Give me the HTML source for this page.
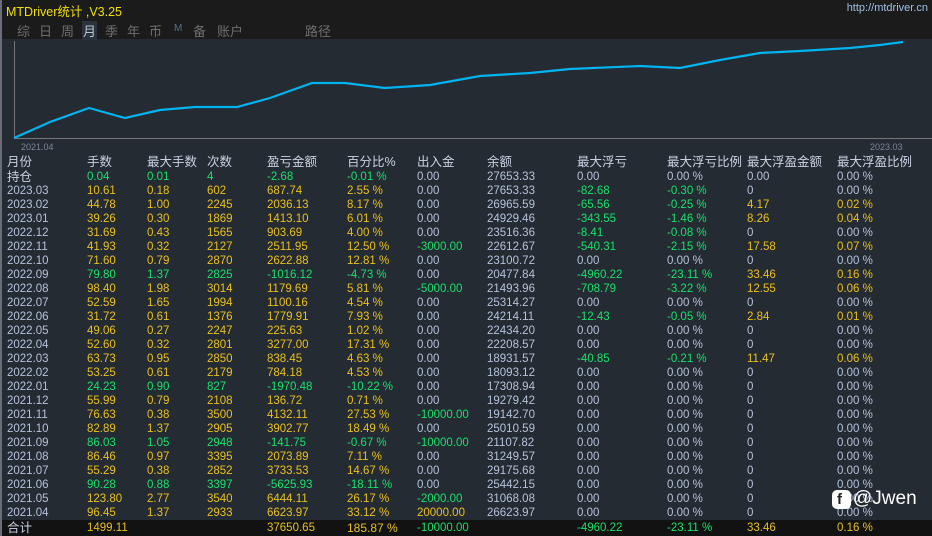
<!DOCTYPE html>
<html><head><meta charset="utf-8"><style>
*{margin:0;padding:0;box-sizing:border-box}
body{width:932px;height:536px;overflow:hidden;background:#252b33;font-family:"Liberation Sans","Noto Sans CJK SC",sans-serif;position:relative}
#top{position:absolute;left:0;top:0;width:932px;height:39px;background:#1b1b1b}
#title{position:absolute;left:6px;top:1px;color:#f0e000;font-size:12.5px}
#url{position:absolute;right:4px;top:2px;color:#9ec0e6;font-size:11px}
#tabs{position:absolute;left:17px;top:21px;color:#6e6e6e;font-size:13px}
#tabs span{position:absolute;top:0;white-space:nowrap}
.sel{background:#2a323c;color:#b8c4d8;padding:0 1px}
#lb{position:absolute;left:0;top:0;width:2px;height:536px;background:#6a6e78}
.r{position:absolute;left:0;width:932px;height:14px;font-size:11.5px;line-height:14px;white-space:nowrap}
.r span{position:absolute;top:0}
.h{font-size:12.5px;color:#c8d2e2;height:16px;line-height:16px}
.g{color:#18e06a}.y{color:#e8c020}.b{color:#b4c2da}
.c0{left:7px}.c1{left:87px}.c2{left:147px}.c3{left:207px}.c4{left:267px}.c5{left:347px}.c6{left:417px}.c7{left:487px}.c8{left:577px}.c9{left:667px}.c10{left:747px}.c11{left:837px}
#tot{position:absolute;left:0;top:520px;width:932px;height:16px;background:#121212}
</style></head><body>
<div id="top"></div>
<div id="title">MTDriver统计 ,V3.25</div>
<div id="url">http://mtdriver.cn</div>
<div id="tabs"><span style="left:0">综</span><span style="left:22px">日</span><span style="left:44px">周</span><span class="sel" style="left:65px">月</span><span style="left:88px">季</span><span style="left:110px">年</span><span style="left:132px">币</span><span style="left:157px;font-size:10px;top:2px;color:#56708e">M</span><span style="left:176px">备</span><span style="left:200px">账户</span><span style="left:288px">路径</span></div>
<svg style="position:absolute;left:0;top:39px" width="932" height="115">
<line x1="14.5" y1="2" x2="14.5" y2="99.5" stroke="#777" stroke-width="1"/>
<line x1="14" y1="99.5" x2="932" y2="99.5" stroke="#777" stroke-width="1"/>
<polyline fill="none" stroke="#00b4f0" stroke-width="2.2" points="14,99 50,83 89,69 125,79 160,71 195,68 237,68 270,59 312,44 345,44 385,49 430,46 480,37 530,34 570,30 640,27 680,29 720,21 760,14 800,12 850,9 880,6 903,3"/>
<text x="21" y="111" fill="#7a8698" font-size="9" font-family="Liberation Sans">2021.04</text>
<text x="870" y="111" fill="#7a8698" font-size="9" font-family="Liberation Sans">2023.03</text>
</svg>
<div id="tot"></div>
<div id="lb"></div>

<div class="r h" style="top:154px"><span class="c0">月份</span><span class="c1">手数</span><span class="c2">最大手数</span><span class="c3">次数</span><span class="c4">盈亏金额</span><span class="c5">百分比%</span><span class="c6">出入金</span><span class="c7">余额</span><span class="c8">最大浮亏</span><span class="c9">最大浮亏比例</span><span class="c10">最大浮盈金额</span><span class="c11">最大浮盈比例</span></div>
<div class="r" style="top:170px;font-size:11.5px"><span class="c0" style="color:#c8d2e2;font-size:12.5px">持仓</span><span class="c1 g">0.04</span><span class="c2 g">0.01</span><span class="c3 g">4</span><span class="c4 g">-2.68</span><span class="c5 g">-0.01 %</span><span class="c6 b">0.00</span><span class="c7 b">27653.33</span><span class="c8 b">0.00</span><span class="c9 b">0.00 %</span><span class="c10 b">0.00</span><span class="c11 b">0.00 %</span></div>
<div class="r" style="top:184px"><span class="c0 b">2023.03</span><span class="c1 y">10.61</span><span class="c2 y">0.18</span><span class="c3 y">602</span><span class="c4 y">687.74</span><span class="c5 y">2.55 %</span><span class="c6 b">0.00</span><span class="c7 b">27653.33</span><span class="c8 g">-82.68</span><span class="c9 g">-0.30 %</span><span class="c10 b">0</span><span class="c11 b">0.00 %</span></div>
<div class="r" style="top:198px"><span class="c0 b">2023.02</span><span class="c1 y">44.78</span><span class="c2 y">1.00</span><span class="c3 y">2245</span><span class="c4 y">2036.13</span><span class="c5 y">8.17 %</span><span class="c6 b">0.00</span><span class="c7 b">26965.59</span><span class="c8 g">-65.56</span><span class="c9 g">-0.25 %</span><span class="c10 y">4.17</span><span class="c11 y">0.02 %</span></div>
<div class="r" style="top:212px"><span class="c0 b">2023.01</span><span class="c1 y">39.26</span><span class="c2 y">0.30</span><span class="c3 y">1869</span><span class="c4 y">1413.10</span><span class="c5 y">6.01 %</span><span class="c6 b">0.00</span><span class="c7 b">24929.46</span><span class="c8 g">-343.55</span><span class="c9 g">-1.46 %</span><span class="c10 y">8.26</span><span class="c11 y">0.04 %</span></div>
<div class="r" style="top:226px"><span class="c0 b">2022.12</span><span class="c1 y">31.69</span><span class="c2 y">0.43</span><span class="c3 y">1565</span><span class="c4 y">903.69</span><span class="c5 y">4.00 %</span><span class="c6 b">0.00</span><span class="c7 b">23516.36</span><span class="c8 g">-8.41</span><span class="c9 g">-0.08 %</span><span class="c10 b">0</span><span class="c11 b">0.00 %</span></div>
<div class="r" style="top:240px"><span class="c0 b">2022.11</span><span class="c1 y">41.93</span><span class="c2 y">0.32</span><span class="c3 y">2127</span><span class="c4 y">2511.95</span><span class="c5 y">12.50 %</span><span class="c6 g">-3000.00</span><span class="c7 b">22612.67</span><span class="c8 g">-540.31</span><span class="c9 g">-2.15 %</span><span class="c10 y">17.58</span><span class="c11 y">0.07 %</span></div>
<div class="r" style="top:254px"><span class="c0 b">2022.10</span><span class="c1 y">71.60</span><span class="c2 y">0.79</span><span class="c3 y">2870</span><span class="c4 y">2622.88</span><span class="c5 y">12.81 %</span><span class="c6 b">0.00</span><span class="c7 b">23100.72</span><span class="c8 b">0.00</span><span class="c9 b">0.00 %</span><span class="c10 b">0</span><span class="c11 b">0.00 %</span></div>
<div class="r" style="top:268px"><span class="c0 b">2022.09</span><span class="c1 g">79.80</span><span class="c2 g">1.37</span><span class="c3 g">2825</span><span class="c4 g">-1016.12</span><span class="c5 g">-4.73 %</span><span class="c6 b">0.00</span><span class="c7 b">20477.84</span><span class="c8 g">-4960.22</span><span class="c9 g">-23.11 %</span><span class="c10 y">33.46</span><span class="c11 y">0.16 %</span></div>
<div class="r" style="top:282px"><span class="c0 b">2022.08</span><span class="c1 y">98.40</span><span class="c2 y">1.98</span><span class="c3 y">3014</span><span class="c4 y">1179.69</span><span class="c5 y">5.81 %</span><span class="c6 g">-5000.00</span><span class="c7 b">21493.96</span><span class="c8 g">-708.79</span><span class="c9 g">-3.22 %</span><span class="c10 y">12.55</span><span class="c11 y">0.06 %</span></div>
<div class="r" style="top:296px"><span class="c0 b">2022.07</span><span class="c1 y">52.59</span><span class="c2 y">1.65</span><span class="c3 y">1994</span><span class="c4 y">1100.16</span><span class="c5 y">4.54 %</span><span class="c6 b">0.00</span><span class="c7 b">25314.27</span><span class="c8 b">0.00</span><span class="c9 b">0.00 %</span><span class="c10 b">0</span><span class="c11 b">0.00 %</span></div>
<div class="r" style="top:310px"><span class="c0 b">2022.06</span><span class="c1 y">31.72</span><span class="c2 y">0.61</span><span class="c3 y">1376</span><span class="c4 y">1779.91</span><span class="c5 y">7.93 %</span><span class="c6 b">0.00</span><span class="c7 b">24214.11</span><span class="c8 g">-12.43</span><span class="c9 g">-0.05 %</span><span class="c10 y">2.84</span><span class="c11 y">0.01 %</span></div>
<div class="r" style="top:324px"><span class="c0 b">2022.05</span><span class="c1 y">49.06</span><span class="c2 y">0.27</span><span class="c3 y">2247</span><span class="c4 y">225.63</span><span class="c5 y">1.02 %</span><span class="c6 b">0.00</span><span class="c7 b">22434.20</span><span class="c8 b">0.00</span><span class="c9 b">0.00 %</span><span class="c10 b">0</span><span class="c11 b">0.00 %</span></div>
<div class="r" style="top:338px"><span class="c0 b">2022.04</span><span class="c1 y">52.60</span><span class="c2 y">0.32</span><span class="c3 y">2801</span><span class="c4 y">3277.00</span><span class="c5 y">17.31 %</span><span class="c6 b">0.00</span><span class="c7 b">22208.57</span><span class="c8 b">0.00</span><span class="c9 b">0.00 %</span><span class="c10 b">0</span><span class="c11 b">0.00 %</span></div>
<div class="r" style="top:352px"><span class="c0 b">2022.03</span><span class="c1 y">63.73</span><span class="c2 y">0.95</span><span class="c3 y">2850</span><span class="c4 y">838.45</span><span class="c5 y">4.63 %</span><span class="c6 b">0.00</span><span class="c7 b">18931.57</span><span class="c8 g">-40.85</span><span class="c9 g">-0.21 %</span><span class="c10 y">11.47</span><span class="c11 y">0.06 %</span></div>
<div class="r" style="top:366px"><span class="c0 b">2022.02</span><span class="c1 y">53.25</span><span class="c2 y">0.61</span><span class="c3 y">2179</span><span class="c4 y">784.18</span><span class="c5 y">4.53 %</span><span class="c6 b">0.00</span><span class="c7 b">18093.12</span><span class="c8 b">0.00</span><span class="c9 b">0.00 %</span><span class="c10 b">0</span><span class="c11 b">0.00 %</span></div>
<div class="r" style="top:380px"><span class="c0 b">2022.01</span><span class="c1 g">24.23</span><span class="c2 g">0.90</span><span class="c3 g">827</span><span class="c4 g">-1970.48</span><span class="c5 g">-10.22 %</span><span class="c6 b">0.00</span><span class="c7 b">17308.94</span><span class="c8 b">0.00</span><span class="c9 b">0.00 %</span><span class="c10 b">0</span><span class="c11 b">0.00 %</span></div>
<div class="r" style="top:394px"><span class="c0 b">2021.12</span><span class="c1 y">55.99</span><span class="c2 y">0.79</span><span class="c3 y">2108</span><span class="c4 y">136.72</span><span class="c5 y">0.71 %</span><span class="c6 b">0.00</span><span class="c7 b">19279.42</span><span class="c8 b">0.00</span><span class="c9 b">0.00 %</span><span class="c10 b">0</span><span class="c11 b">0.00 %</span></div>
<div class="r" style="top:408px"><span class="c0 b">2021.11</span><span class="c1 y">76.63</span><span class="c2 y">0.38</span><span class="c3 y">3500</span><span class="c4 y">4132.11</span><span class="c5 y">27.53 %</span><span class="c6 g">-10000.00</span><span class="c7 b">19142.70</span><span class="c8 b">0.00</span><span class="c9 b">0.00 %</span><span class="c10 b">0</span><span class="c11 b">0.00 %</span></div>
<div class="r" style="top:422px"><span class="c0 b">2021.10</span><span class="c1 y">82.89</span><span class="c2 y">1.37</span><span class="c3 y">2905</span><span class="c4 y">3902.77</span><span class="c5 y">18.49 %</span><span class="c6 b">0.00</span><span class="c7 b">25010.59</span><span class="c8 b">0.00</span><span class="c9 b">0.00 %</span><span class="c10 b">0</span><span class="c11 b">0.00 %</span></div>
<div class="r" style="top:436px"><span class="c0 b">2021.09</span><span class="c1 g">86.03</span><span class="c2 g">1.05</span><span class="c3 g">2948</span><span class="c4 g">-141.75</span><span class="c5 g">-0.67 %</span><span class="c6 g">-10000.00</span><span class="c7 b">21107.82</span><span class="c8 b">0.00</span><span class="c9 b">0.00 %</span><span class="c10 b">0</span><span class="c11 b">0.00 %</span></div>
<div class="r" style="top:450px"><span class="c0 b">2021.08</span><span class="c1 y">86.46</span><span class="c2 y">0.97</span><span class="c3 y">3395</span><span class="c4 y">2073.89</span><span class="c5 y">7.11 %</span><span class="c6 b">0.00</span><span class="c7 b">31249.57</span><span class="c8 b">0.00</span><span class="c9 b">0.00 %</span><span class="c10 b">0</span><span class="c11 b">0.00 %</span></div>
<div class="r" style="top:464px"><span class="c0 b">2021.07</span><span class="c1 y">55.29</span><span class="c2 y">0.38</span><span class="c3 y">2852</span><span class="c4 y">3733.53</span><span class="c5 y">14.67 %</span><span class="c6 b">0.00</span><span class="c7 b">29175.68</span><span class="c8 b">0.00</span><span class="c9 b">0.00 %</span><span class="c10 b">0</span><span class="c11 b">0.00 %</span></div>
<div class="r" style="top:478px"><span class="c0 b">2021.06</span><span class="c1 g">90.28</span><span class="c2 g">0.88</span><span class="c3 g">3397</span><span class="c4 g">-5625.93</span><span class="c5 g">-18.11 %</span><span class="c6 b">0.00</span><span class="c7 b">25442.15</span><span class="c8 b">0.00</span><span class="c9 b">0.00 %</span><span class="c10 b">0</span><span class="c11 b">0.00 %</span></div>
<div class="r" style="top:492px"><span class="c0 b">2021.05</span><span class="c1 y">123.80</span><span class="c2 y">2.77</span><span class="c3 y">3540</span><span class="c4 y">6444.11</span><span class="c5 y">26.17 %</span><span class="c6 g">-2000.00</span><span class="c7 b">31068.08</span><span class="c8 b">0.00</span><span class="c9 b">0.00 %</span><span class="c10 b">0</span><span class="c11 b">0.00 %</span></div>
<div class="r" style="top:506px"><span class="c0 b">2021.04</span><span class="c1 y">96.45</span><span class="c2 y">1.37</span><span class="c3 y">2933</span><span class="c4 y">6623.97</span><span class="c5 y">33.12 %</span><span class="c6 y">20000.00</span><span class="c7 b">26623.97</span><span class="c8 b">0.00</span><span class="c9 b">0.00 %</span><span class="c10 b">0</span><span class="c11 b">0.00 %</span></div>
<div class="r" style="top:521px"><span class="c0" style="color:#c8d2e2;font-size:12.5px">合计</span><span class="c1 y" style="left:87px">1499.11</span><span class="c4 y">37650.65</span><span class="c5 y" style="font-size:12px">185.87 %</span><span class="c6 g">-10000.00</span><span class="c8 g">-4960.22</span><span class="c9 g">-23.11 %</span><span class="c10 y">33.46</span><span class="c11 y">0.16 %</span></div>

<div style="position:absolute;left:832px;top:490px;width:19px;height:19px;background:#fff;border-radius:5px"></div>
<div style="position:absolute;left:837px;top:490px;color:#222;font-size:15px;font-weight:bold;line-height:19px">f</div>
<div style="position:absolute;left:853px;top:487px;color:#fff;font-size:19px;line-height:24px">@Jwen</div>
</body></html>
